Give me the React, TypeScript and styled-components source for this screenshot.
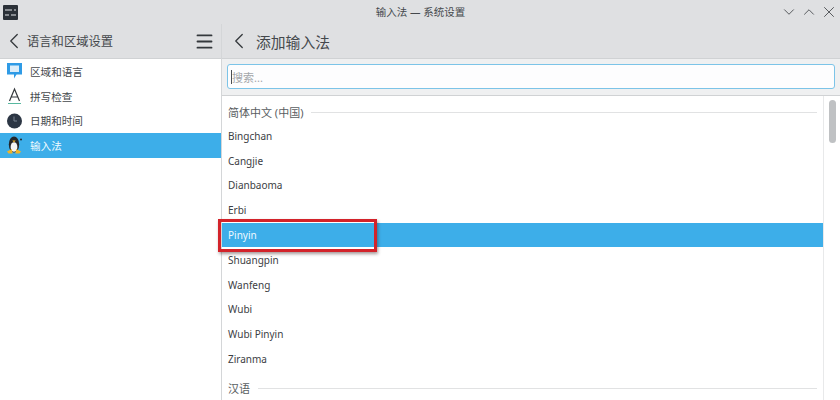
import React from "react";
import styled, { createGlobalStyle } from "styled-components";
import { ChevronLeft, ChevronDown, ChevronUp, X, Menu } from "lucide-react";

const GlobalStyle = createGlobalStyle`
  html, body {
    margin: 0;
    padding: 0;
    background: #ffffff;
  }
  body {
    font-family: "Noto Sans", "Noto Sans CJK SC", sans-serif;
    color: #3a3f44;
  }
`;

const Window = styled.div`
  position: relative;
  width: 840px;
  height: 400px;
  overflow: hidden;
  display: flex;
  flex-direction: column;
  background: #ffffff;
`;

const TitleBar = styled.div`
  height: 24px;
  flex: none;
  background: #dfe0e2;
  display: flex;
  align-items: center;
  padding: 0 2px 0 3px;
`;

const TitleSide = styled.div<{ $end?: boolean }>`
  flex: 1;
  display: flex;
  align-items: center;
  justify-content: ${(p) => (p.$end ? "flex-end" : "flex-start")};
  gap: 2px;
  color: #4a4d50;
`;

const AppIcon = styled.svg`
  width: 15px;
  height: 15px;
  display: block;
`;

const WindowTitle = styled.div`
  font-size: 10.5px;
  color: #44484c;
  padding-bottom: 1px;
`;

const Body = styled.div`
  flex: 1;
  display: flex;
  min-height: 0;
`;

const Sidebar = styled.div`
  width: 222px;
  flex: none;
  box-sizing: border-box;
  border-right: 1px solid #d4d6d8;
  display: flex;
  flex-direction: column;
`;

const Header = styled.div<{ $inset: number; $gap: number }>`
  height: 35px;
  flex: none;
  background: #dfe0e2;
  display: flex;
  align-items: center;
  gap: ${(p) => p.$gap}px;
  padding: 0 6px 0 ${(p) => p.$inset}px;
  border-bottom: 1px solid #d0d2d4;
  box-sizing: border-box;
  color: #34383c;
`;

const HeaderTitle = styled.div<{ $size: number }>`
  flex: 1;
  font-size: ${(p) => p.$size}px;
  color: #44484c;
`;

const SideList = styled.div`
  display: flex;
  flex-direction: column;
`;

const SideRow = styled.div<{ $active?: boolean }>`
  height: 24.7px;
  display: flex;
  align-items: center;
  gap: 7px;
  padding-left: 6px;
  font-size: 10.6px;
  background: ${(p) => (p.$active ? "#3daee9" : "transparent")};
  color: ${(p) => (p.$active ? "#f2fbff" : "#44484c")};
`;

const SideIcon = styled.svg`
  width: 17px;
  height: 18px;
  flex: none;
  display: block;
`;

const Main = styled.div`
  flex: 1;
  display: flex;
  flex-direction: column;
  min-width: 0;
`;

const SearchStrip = styled.div`
  height: 37px;
  flex: none;
  background: #eff0f1;
  border-bottom: 1px solid #d0d2d4;
  box-sizing: border-box;
  padding: 5px 5px 5px 5px;
`;

const SearchBox = styled.div`
  height: 25px;
  box-sizing: border-box;
  background: #fdfdfe;
  border: 1px solid #7cc4e8;
  border-radius: 3px;
  display: flex;
  align-items: center;
  padding-left: 3px;
  font-size: 11px;
  color: #a4a7aa;
`;

const Caret = styled.span`
  width: 1px;
  height: 14px;
  background: #4a4e52;
`;

const Content = styled.div`
  flex: 1;
  display: flex;
  min-height: 0;
`;

const List = styled.div`
  flex: 1;
  min-width: 0;
  display: flex;
  flex-direction: column;
`;

const Section = styled.div<{ $first?: boolean }>`
  height: ${(p) => (p.$first ? "27.4px" : "34px")};
  flex: none;
  box-sizing: border-box;
  display: flex;
  align-items: center;
  gap: 8px;
  padding: ${(p) => (p.$first ? "5px 6px 0 6px" : "0 6px 0 6px")};
  font-size: 11px;
  color: #5a5e62;

  &::after {
    content: "";
    flex: 1;
    height: 1px;
    background: #e1e2e3;
  }
`;

const Row = styled.div<{ $active?: boolean }>`
  height: 24.8px;
  flex: none;
  display: flex;
  align-items: center;
  padding-left: 6px;
  font-size: 10px;
  background: ${(p) => (p.$active ? "#3daee9" : "transparent")};
  color: ${(p) => (p.$active ? "#eef9ff" : "#3c4044")};
`;

const ScrollTrack = styled.div`
  width: 17px;
  flex: none;
  border-left: 1px solid #e8e9ea;
  padding: 4px 0 0 5px;
  box-sizing: border-box;
`;

const ScrollThumb = styled.div`
  width: 7px;
  height: 43px;
  border-radius: 4px;
  background: #bfc1c3;
`;

const Highlight = styled.div`
  position: absolute;
  left: 218px;
  top: 219px;
  width: 159px;
  height: 33px;
  box-sizing: border-box;
  border: 3px solid #d3232a;
  box-shadow: 1px 2px 3px rgba(60, 30, 30, 0.45);
`;

const sideItems = ["区域和语言", "拼写检查", "日期和时间", "输入法"];
const methods = [
  "Bingchan",
  "Cangjie",
  "Dianbaoma",
  "Erbi",
  "Pinyin",
  "Shuangpin",
  "Wanfeng",
  "Wubi",
  "Wubi Pinyin",
  "Ziranma",
];

const sideIcons = [
  <SideIcon viewBox="0 0 17 18" key="region">
    <path d="M1 1h15v11.5h-5.5L8 16.5V12.5H1z" fill="#2f9be6" />
    <rect x="4" y="3.5" width="9" height="6.5" fill="#dcedf9" />
  </SideIcon>,
  <SideIcon viewBox="0 0 17 18" key="spell">
    <path d="M3.5 14 8.5 2 13.5 14M5.2 10h6.6" fill="none" stroke="#33373b" strokeWidth="1.2" />
    <path d="M2 16.5h13" stroke="#58b8a0" strokeWidth="1" />
  </SideIcon>,
  <SideIcon viewBox="0 0 17 18" key="clock">
    <circle cx="8.5" cy="9" r="7.5" fill="#2c3644" />
    <path d="M8 4.5V9h3" fill="none" stroke="#77818e" strokeWidth="1" />
  </SideIcon>,
  <SideIcon viewBox="0 0 17 18" key="tux">
    <ellipse cx="8" cy="8.5" rx="5.2" ry="8" fill="#23262a" />
    <ellipse cx="8" cy="11" rx="3.4" ry="4.8" fill="#f4f5f5" />
    <path d="M6.3 4.4h3.4L8 6.6z" fill="#f0b429" />
    <path d="M1 15.5 5.8 13 6.6 17.5H2.5zM15 15.5 10.2 13 9.4 17.5H13.5z" fill="#f0b429" />
    <circle cx="15" cy="3.5" r="1" fill="#23262a" />
  </SideIcon>,
];

const App = () => {
  return (
    <>
      <GlobalStyle />
      <Window>
        <TitleBar>
          <TitleSide>
            <AppIcon viewBox="0 0 15 15">
              <rect width="15" height="15" rx="1" fill="#2b3138" />
              <path d="M2 5h7M2 10h4M11 5h2M8 10h5" stroke="#e4e6e8" strokeWidth="1" />
            </AppIcon>
          </TitleSide>
          <WindowTitle>输入法 — 系统设置</WindowTitle>
          <TitleSide $end>
            <ChevronDown size={18} strokeWidth={1.2} />
            <ChevronUp size={18} strokeWidth={1.2} />
            <X size={18} strokeWidth={1.2} />
          </TitleSide>
        </TitleBar>
        <Body>
          <Sidebar>
            <Header $inset={1} $gap={0}>
              <ChevronLeft size={26} strokeWidth={1.2} />
              <HeaderTitle $size={12.3}>语言和区域设置</HeaderTitle>
              <Menu size={21} strokeWidth={2.1} />
            </Header>
            <SideList>
              {sideItems.map((label, i) => (
                <SideRow key={label} $active={i === 3}>
                  {sideIcons[i]}
                  {label}
                </SideRow>
              ))}
            </SideList>
          </Sidebar>
          <Main>
            <Header $inset={3.5} $gap={4.5}>
              <ChevronLeft size={26} strokeWidth={1.2} />
              <HeaderTitle $size={14.8}>添加输入法</HeaderTitle>
            </Header>
            <SearchStrip>
              <SearchBox>
                <Caret />
                搜索...
              </SearchBox>
            </SearchStrip>
            <Content>
              <List>
                <Section $first>简体中文 (中国)</Section>
                {methods.map((name) => (
                  <Row key={name} $active={name === "Pinyin"}>
                    {name}
                  </Row>
                ))}
                <Section>汉语</Section>
              </List>
              <ScrollTrack>
                <ScrollThumb />
              </ScrollTrack>
            </Content>
          </Main>
        </Body>
        <Highlight />
      </Window>
    </>
  );
};

export default App;
